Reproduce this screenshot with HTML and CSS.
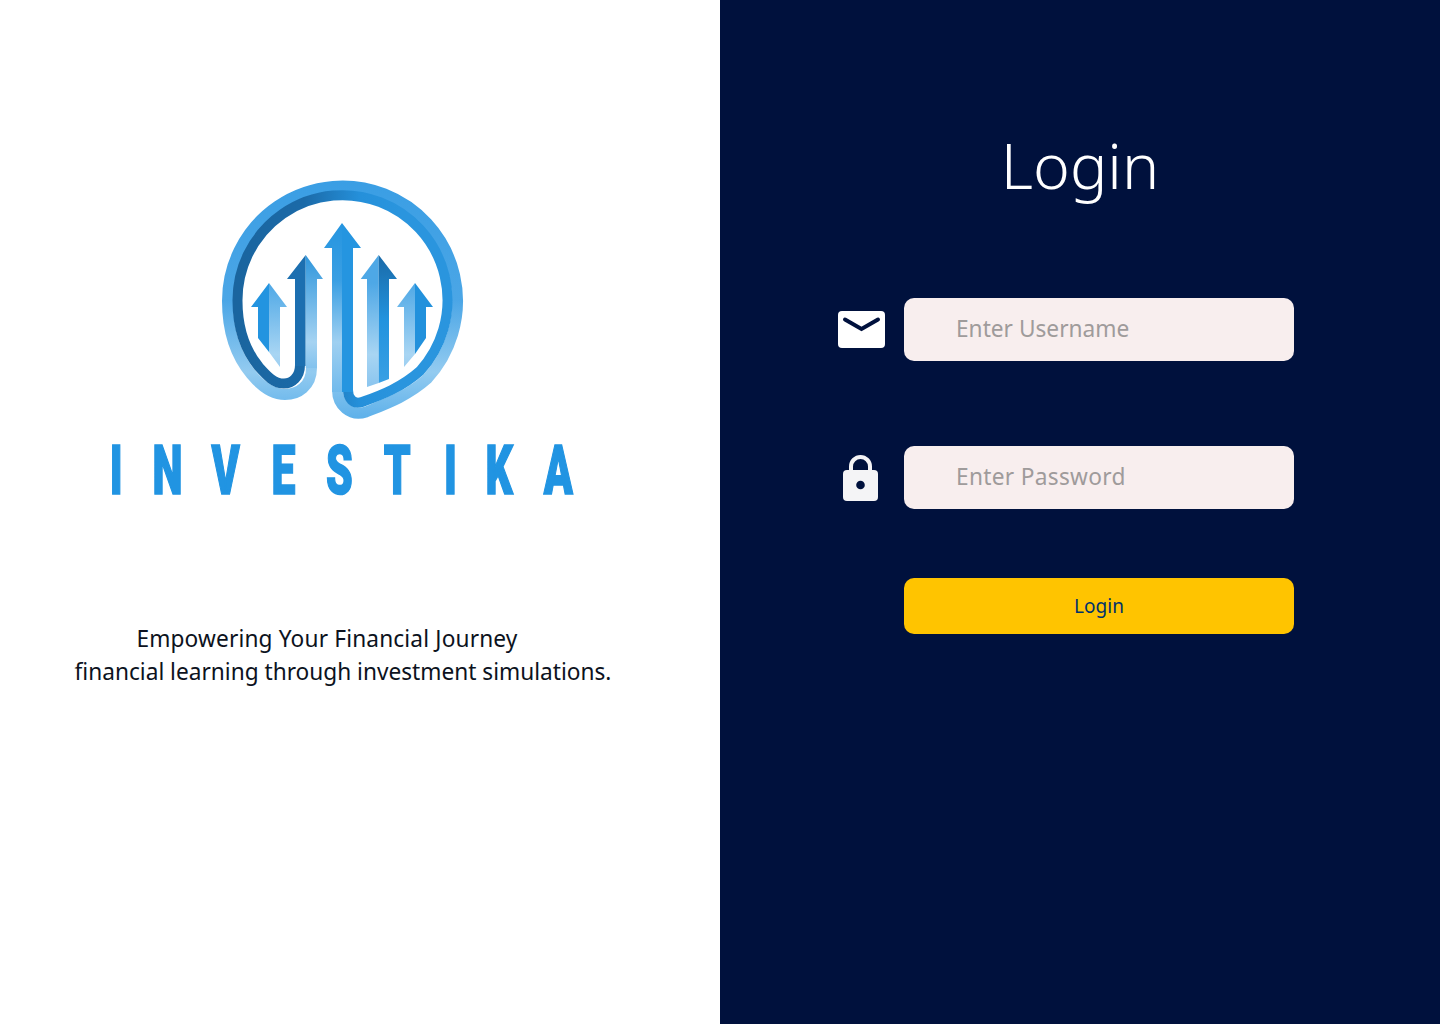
FILE: index.html
```html
<!DOCTYPE html>
<html lang="en">
<head>
<meta charset="utf-8">
<title>Investika Login</title>
<link rel="stylesheet" href="styles.css">
</head>
<body>
<main class="page">
  <section class="brand">
    <svg class="logo" viewBox="100 170 486 330" width="486" height="330" role="img" aria-label="Investika">
      <defs>
        <linearGradient id="outer" gradientUnits="userSpaceOnUse" x1="342" y1="180" x2="342" y2="420">
          <stop offset="0" stop-color="#3a9ee4"/><stop offset=".5" stop-color="#4ba6e6"/><stop offset=".8" stop-color="#93cbf0"/><stop offset="1" stop-color="#5cb0ea"/>
        </linearGradient>
        <linearGradient id="inner" gradientUnits="userSpaceOnUse" x1="240" y1="0" x2="400" y2="0">
          <stop offset="0" stop-color="#1a659f"/><stop offset=".4" stop-color="#1b6aa8"/><stop offset=".75" stop-color="#2590da"/><stop offset="1" stop-color="#2a95de"/>
        </linearGradient>
        <linearGradient id="stemLight" gradientUnits="userSpaceOnUse" x1="0" y1="255" x2="0" y2="400">
          <stop offset="0" stop-color="#2f96dc"/><stop offset=".6" stop-color="#a5d3f2"/><stop offset="1" stop-color="#58ade8"/>
        </linearGradient>
        <linearGradient id="centre" gradientUnits="userSpaceOnUse" x1="0" y1="223" x2="0" y2="415">
          <stop offset="0" stop-color="#2595e0"/><stop offset=".3" stop-color="#3a9fe3"/><stop offset=".62" stop-color="#9fd0f1"/><stop offset="1" stop-color="#5cb0ea"/>
        </linearGradient>
        <linearGradient id="fade" gradientUnits="userSpaceOnUse" x1="0" y1="283" x2="0" y2="385">
          <stop offset="0" stop-color="#4ea8e6"/><stop offset=".7" stop-color="#a8d5f3"/><stop offset="1" stop-color="#8cc6ef"/>
        </linearGradient>
        <linearGradient id="deep" gradientUnits="userSpaceOnUse" x1="0" y1="255" x2="0" y2="385">
          <stop offset="0" stop-color="#1a6aa8"/><stop offset=".5" stop-color="#2293de"/><stop offset="1" stop-color="#3aa0e4"/>
        </linearGradient>
      </defs>
      <!-- ring, outer band -->
      <path fill="none" stroke="url(#outer)" stroke-width="11" d="M311.500 300V368C311.500 386 298 394.500 285 394.500C271 394.500 260 385 251 374C236 356 227.500 332 227.500 301A115 115 0 1 1 427 379C408 396 386 404 366 412C350 417 337.500 405 337.500 390V300"/>
      <!-- ring, inner band -->
      <path fill="none" stroke="url(#inner)" stroke-width="10" d="M300 300V365C300 377 292 383.500 284 383.500C274 383.500 267 376 259 367C245 350 237.500 328 237.500 301A105 105 0 1 1 420 371C402 387 382 395 362 402C353 405 348 398 348 390V300"/>
      <!-- central arrow -->
      <path fill="url(#centre)" d="M342 223V392L332 392V248H324Z"/>
      <path fill="#2595e0" d="M342 223L361 248H353V392H342Z"/>
      <!-- arrow 2 -->
      <path fill="#1c6fb0" d="M305.700 255V366H295V279H287Z"/>
      <path fill="url(#stemLight)" d="M305.700 255L323 279H317V368L305.700 368Z"/>
      <!-- arrow 1 -->
      <path fill="#2394e0" d="M269 283V352L258 338V307H251Z"/>
      <path fill="url(#fade)" d="M269 283L287 307H280V367L269 352Z"/>
      <!-- arrow 4 -->
      <path fill="url(#fade)" d="M378.700 255V383L367 387V279H360.700Z"/>
      <path fill="url(#deep)" d="M378.700 255L397 279H389V379L378.700 383Z"/>
      <!-- arrow 5 -->
      <path fill="url(#fade)" d="M415 283V354L404 367V307H397Z"/>
      <path fill="#2291dc" d="M415 283L433 307H426V338L415 354Z"/>
      <text class="wordmark" transform="scale(.62 1)" y="494" x="177 246 341 438 526 619 716 783 877">INVESTIKA</text>
    </svg>
    <p class="tagline"><span class="tagline-first">Empowering Your Financial Journey</span><br>financial learning through investment simulations.</p>
  </section>
  <section class="auth">
    <h1 class="title">Login</h1>
    <form class="form">
      <div class="row">
        <svg class="icon" viewBox="0 0 47 37" width="47" height="37" aria-hidden="true">
          <rect width="47" height="37" rx="4" fill="#fff"/>
          <path d="M7 8.500L23.500 18L40 8.500" fill="none" stroke="#00113d" stroke-width="4" stroke-linecap="round" stroke-linejoin="miter"/>
        </svg>
        <input class="field" type="text" placeholder="Enter Username">
      </div>
      <div class="row">
        <svg class="icon" viewBox="0 0 47 46" width="47" height="46" aria-hidden="true">
          <path d="M13 16V11.500a9.500 9.500 0 0 1 19 0V16" fill="none" stroke="#f4f4f6" stroke-width="4"/>
          <rect x="5" y="15" width="35" height="31" rx="4" fill="#f4f4f6"/>
          <circle cx="22.500" cy="30" r="4.300" fill="#00113d"/>
        </svg>
        <input class="field field-password" type="password" placeholder="Enter Password">
      </div>
      <div class="row row-action">
        <button class="submit" type="button">Login</button>
      </div>
    </form>
  </section>
</main>
</body>
</html>
```
FILE: styles.css
```css
* { box-sizing: border-box; }
html, body { margin: 0; height: 100%; }
body { font-family: "Noto Sans", "Open Sans", sans-serif; }

.page {
  display: grid;
  grid-template-columns: 720px 720px;
  height: 1024px;
  overflow: hidden;
}

.brand {
  background: #fff;
  padding: 170px 34px 0 0;
  display: flex;
  flex-direction: column;
  align-items: center;
}
.logo { display: block; flex: none; overflow: visible; filter: blur(0.5px); }
.wordmark {
  font-family: "Roboto", sans-serif;
  font-weight: 900;
  font-size: 69px;
  fill: #2194e2;
  stroke: #2194e2;
  stroke-width: 1.6px;
}
.tagline {
  margin: 122px 0 0;
  font-size: 22.66px;
  line-height: 33px;
  text-align: center;
  color: #0c1220;
  white-space: nowrap;
}
.tagline-first { padding-right: 32px; letter-spacing: 0.16px; }

.auth {
  background: #00113d;
  padding-top: 124px;
  display: flex;
  flex-direction: column;
  align-items: center;
}
.title {
  margin: 0;
  font-size: 62.5px;
  line-height: 82px;
  font-weight: 300;
  color: #fff;
}
.form {
  margin: 92px 0 0;
  align-self: flex-start;
  padding-left: 118px;
  display: flex;
  flex-direction: column;
  gap: 85px;
}
.row {
  display: grid;
  grid-template-columns: 66px 390px;
  align-items: center;
}
.row-action { margin-top: -16px; }
.icon { display: block; }
.field {
  height: 63px;
  border: 0;
  border-radius: 10px;
  background: #f8eeee;
  padding: 0 16px 2px 52px;
  font: inherit;
  font-size: 22.7px;
  color: #333;
  outline: none;
}
.field::placeholder { color: #9f9b9b; opacity: 1; }
.field-password::placeholder { letter-spacing: 0.3px; }
.submit {
  grid-column: 2;
  height: 56px;
  border: 0;
  border-radius: 10px;
  background: #ffc400;
  color: #00326b;
  font: inherit;
  font-size: 19px;
  padding: 0;
}
```
